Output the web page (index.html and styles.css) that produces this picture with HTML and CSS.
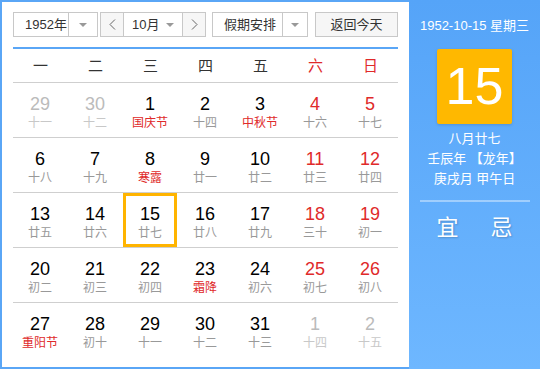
FILE: index.html
```html
<!DOCTYPE html>
<html>
  <head>
    <title>万年历</title>
    <link rel="stylesheet" href="styles.css">
  </head>
  <body>
    <div class="calendar">
      <div class="main">
        <div class="toolbar">
          <div class="select year">
            <span class="select-text">1952年</span>
            <span class="select-arrow"><i class="caret"></i></span>
          </div>
          <div class="month-box">
            <span class="nav">
              <svg width="7" height="11" viewBox="0 0 7 11"><polyline points="6,0.5 1,5.5 6,10.5" fill="none" stroke="#666" stroke-width="1"/></svg>
            </span>
            <span class="select month">
              <span class="select-text">10月</span>
              <i class="caret"></i>
            </span>
            <span class="nav">
              <svg width="7" height="11" viewBox="0 0 7 11"><polyline points="1,0.5 6,5.5 1,10.5" fill="none" stroke="#666" stroke-width="1"/></svg>
            </span>
          </div>
          <div class="select holiday">
            <span class="select-text">假期安排</span>
            <span class="select-arrow"><i class="caret"></i></span>
          </div>
          <div class="today-btn">返回今天</div>
        </div>

        <div class="weekdays">
          <span>一</span><span>二</span><span>三</span><span>四</span><span>五</span>
          <span class="red">六</span><span class="red">日</span>
        </div>

        <div class="days">
          <div class="cell other"><div class="day"><b>29</b><em>十一</em></div></div>
          <div class="cell other"><div class="day"><b>30</b><em>十二</em></div></div>
          <div class="cell fest"><div class="day"><b>1</b><em>国庆节</em></div></div>
          <div class="cell"><div class="day"><b>2</b><em>十四</em></div></div>
          <div class="cell fest"><div class="day"><b>3</b><em>中秋节</em></div></div>
          <div class="cell weekend"><div class="day"><b>4</b><em>十六</em></div></div>
          <div class="cell weekend"><div class="day"><b>5</b><em>十七</em></div></div>

          <div class="cell"><div class="day"><b>6</b><em>十八</em></div></div>
          <div class="cell"><div class="day"><b>7</b><em>十九</em></div></div>
          <div class="cell fest"><div class="day"><b>8</b><em>寒露</em></div></div>
          <div class="cell"><div class="day"><b>9</b><em>廿一</em></div></div>
          <div class="cell"><div class="day"><b>10</b><em>廿二</em></div></div>
          <div class="cell weekend"><div class="day"><b>11</b><em>廿三</em></div></div>
          <div class="cell weekend"><div class="day"><b>12</b><em>廿四</em></div></div>

          <div class="cell"><div class="day"><b>13</b><em>廿五</em></div></div>
          <div class="cell"><div class="day"><b>14</b><em>廿六</em></div></div>
          <div class="cell today"><div class="day"><b>15</b><em>廿七</em></div></div>
          <div class="cell"><div class="day"><b>16</b><em>廿八</em></div></div>
          <div class="cell"><div class="day"><b>17</b><em>廿九</em></div></div>
          <div class="cell weekend"><div class="day"><b>18</b><em>三十</em></div></div>
          <div class="cell weekend"><div class="day"><b>19</b><em>初一</em></div></div>

          <div class="cell"><div class="day"><b>20</b><em>初二</em></div></div>
          <div class="cell"><div class="day"><b>21</b><em>初三</em></div></div>
          <div class="cell"><div class="day"><b>22</b><em>初四</em></div></div>
          <div class="cell fest"><div class="day"><b>23</b><em>霜降</em></div></div>
          <div class="cell"><div class="day"><b>24</b><em>初六</em></div></div>
          <div class="cell weekend"><div class="day"><b>25</b><em>初七</em></div></div>
          <div class="cell weekend"><div class="day"><b>26</b><em>初八</em></div></div>

          <div class="cell fest"><div class="day"><b>27</b><em>重阳节</em></div></div>
          <div class="cell"><div class="day"><b>28</b><em>初十</em></div></div>
          <div class="cell"><div class="day"><b>29</b><em>十一</em></div></div>
          <div class="cell"><div class="day"><b>30</b><em>十二</em></div></div>
          <div class="cell"><div class="day"><b>31</b><em>十三</em></div></div>
          <div class="cell other"><div class="day"><b>1</b><em>十四</em></div></div>
          <div class="cell other"><div class="day"><b>2</b><em>十五</em></div></div>
        </div>
      </div>

      <div class="side">
        <div class="side-date">1952-10-15 星期三</div>
        <div class="big-day">15</div>
        <div class="lunar">
          <div>八月廿七</div>
          <div>壬辰年 【龙年】</div>
          <div>庚戌月 甲午日</div>
        </div>
        <div class="side-line"></div>
        <div class="yiji"><span>宜</span><span>忌</span></div>
      </div>
    </div>
  </body>
</html>
```

FILE: styles.css
```css
body {
  margin: 0;
  font-family: "Liberation Sans", "Noto Sans CJK SC", sans-serif;
}
.calendar {
  display: flex;
  width: 540px;
  height: 369px;
  background-color: #5aa6f6;
}
.main {
  width: 385px;
  margin: 2px 0 2px 2px;
  padding: 10px 11px 0 11px;
  background-color: #fff;
}

/* toolbar */
.toolbar {
  display: flex;
  height: 25px;
  font-size: 13px;
  color: #333;
}
.select {
  display: flex;
  box-sizing: border-box;
  height: 25px;
  border: 1px solid #c8c8c8;
  background-color: #fff;
}
.select-text {
  flex: 1;
  padding-left: 11px;
  line-height: 23px;
  white-space: nowrap;
}
.select-arrow {
  display: flex;
  align-items: center;
  justify-content: center;
  border-left: 1px solid #c8c8c8;
}
.caret {
  width: 0;
  height: 0;
  border-left: 4px solid transparent;
  border-right: 4px solid transparent;
  border-top: 4px solid #999;
}
.year {
  width: 85px;
  margin-right: 2px;
}
.year .select-arrow {
  width: 28px;
}
.month-box {
  display: flex;
  box-sizing: border-box;
  width: 106px;
  height: 25px;
  margin-right: 6px;
  border: 1px solid #c8c8c8;
}
.nav {
  display: flex;
  align-items: center;
  justify-content: center;
  width: 22px;
  background-color: #f6f6f6;
}
.month {
  flex: 1;
  height: 23px;
  align-items: center;
  border: 0;
  border-left: 1px solid #c8c8c8;
  border-right: 1px solid #c8c8c8;
  padding-right: 8px;
}
.month .select-text {
  padding-left: 8px;
}
.holiday {
  width: 96px;
}
.holiday .select-arrow {
  width: 24px;
}
.today-btn {
  box-sizing: border-box;
  width: 83px;
  height: 25px;
  margin-left: auto;
  border: 1px solid #c8c8c8;
  background-color: #f6f6f6;
  line-height: 23px;
  text-align: center;
}

/* weekdays */
.weekdays {
  display: grid;
  grid-template-columns: repeat(7, 55px);
  height: 33px;
  margin-top: 10px;
  border-top: 2px solid #5aa6f6;
  border-bottom: 1px solid #cfcfcf;
  font-size: 15px;
  line-height: 33px;
  color: #333;
  text-align: center;
}
.weekdays .red {
  color: #e02a2a;
}

/* days */
.days {
  display: grid;
  grid-template-columns: repeat(7, 55px);
}
.cell {
  box-sizing: border-box;
  height: 55px;
  border-bottom: 1px solid #cfcfcf;
}
.cell:nth-last-child(-n+7) {
  border-bottom: 0;
}
.day {
  box-sizing: border-box;
  width: 54px;
  height: 54px;
  padding-top: 11px;
  text-align: center;
}
.day b {
  display: block;
  font-size: 18px;
  font-weight: normal;
  line-height: 20px;
  color: #000;
}
.day em {
  display: block;
  font-size: 12px;
  font-style: normal;
  line-height: 18px;
  color: #999;
}
.weekend b {
  color: #e02a2a;
}
.fest em {
  color: #e02a2a;
}
.other b {
  color: #bbb;
}
.other em {
  color: #c8c8c8;
}
.today .day {
  border: 3px solid #ffb400;
  padding-top: 8px;
}

/* side panel */
.side {
  flex: 1;
  display: flex;
  flex-direction: column;
  align-items: center;
  padding-top: 17px;
  background: linear-gradient(#55a4f8, #6eb7ff);
  color: #fff;
}
.side-date {
  font-size: 13px;
  line-height: 18px;
}
.big-day {
  width: 75px;
  height: 75px;
  margin-top: 14px;
  border-radius: 2px;
  background-color: #ffb800;
  box-shadow: 0 1px 3px rgba(0, 0, 0, 0.15);
  font-size: 52px;
  line-height: 75px;
  text-align: center;
}
.lunar {
  margin-top: 5px;
  font-size: 13px;
  line-height: 20px;
  text-align: center;
}
.side-line {
  width: 110px;
  height: 2px;
  margin-top: 11px;
  background-color: rgba(255, 255, 255, 0.4);
}
.yiji {
  display: flex;
  gap: 32px;
  margin-top: 11px;
  font-size: 22px;
  line-height: 30px;
  text-shadow: 1px 1px 2px rgba(0, 0, 0, 0.2);
}
```
